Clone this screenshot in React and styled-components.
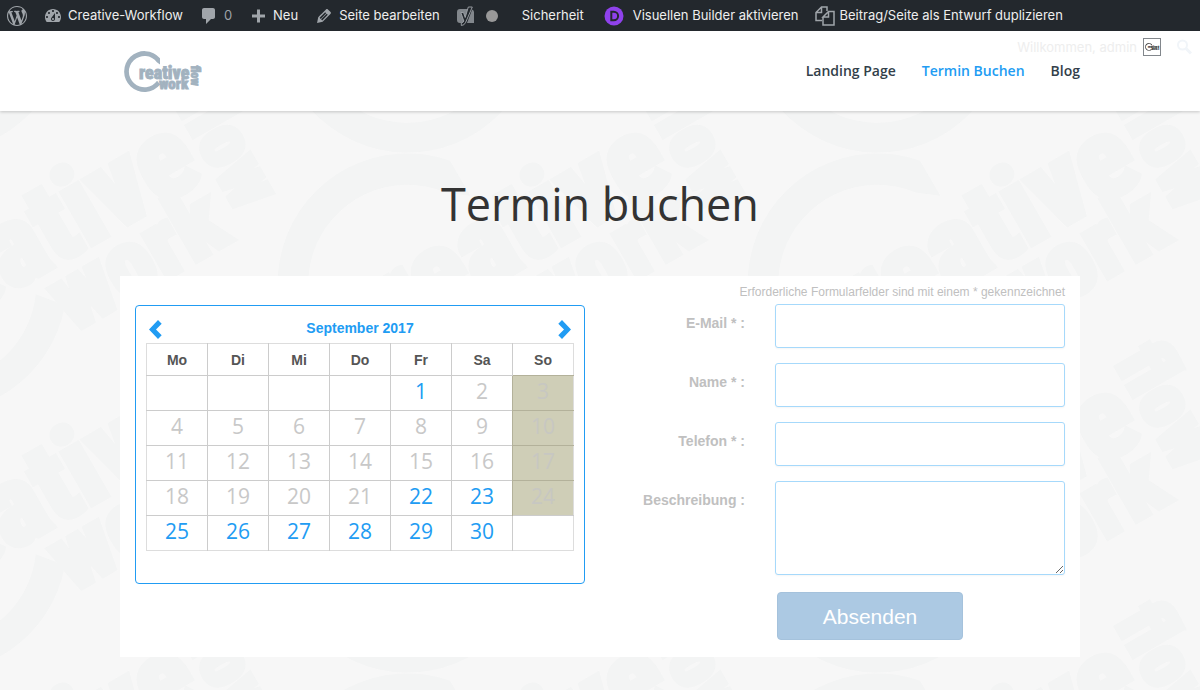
import React from "react";
import styled, { createGlobalStyle } from "styled-components";

const GlobalStyle = createGlobalStyle`
  *, *::before, *::after { box-sizing: border-box; }
  body {
    margin: 0;
    background: #f7f7f7;
    font-family: "Liberation Sans", Arial, sans-serif;
  }
`;

const BLUE = "#219cf3";

/* ---------- Admin bar ---------- */

const AdminBar = styled.nav`
  position: relative;
  z-index: 2;
  display: flex;
  align-items: center;
  height: 31px;
  background: #23282d;
  color: #eee;
  font: 400 13px/31px Inter, sans-serif;
  white-space: nowrap;
`;

const BarItem = styled.a`
  display: flex;
  align-items: center;
  gap: ${(p) => p.$gap || 5}px;
  height: 31px;
  padding: 0 8px 0 ${(p) => p.$lead || 8}px;
  color: ${(p) => (p.$muted ? "#9ea3a8" : "#eee")};
  text-decoration: none;
`;

const BarIcon = styled.svg`
  display: block;
  flex: none;
  width: 20px;
  height: 20px;
  fill: #a0a5aa;
`;

const StatusDot = styled.span`
  width: 12px;
  height: 12px;
  border-radius: 50%;
  background: #999;
`;

const Account = styled.div`
  position: absolute;
  top: 31px;
  right: 7px;
  display: flex;
  align-items: center;
  gap: 6px;
  height: 32px;
`;

const AccountLink = styled.a`
  display: flex;
  align-items: center;
  gap: 6px;
  color: #eee;
  text-decoration: none;
`;

const Avatar = styled.span`
  display: flex;
  align-items: center;
  justify-content: center;
  width: 18px;
  height: 18px;
  border: 1px solid #82878c;
  background: #fff;
  color: #444;
`;

const SearchButton = styled.button`
  display: flex;
  padding: 0;
  margin-left: 8px;
  border: 0;
  background: none;
`;

/* ---------- Site header ---------- */

const SiteHeader = styled.header`
  position: relative;
  z-index: 1;
  background: #fff;
  box-shadow: 0 1px 3px rgba(0, 0, 0, 0.2);
`;

const HeaderInner = styled.div`
  display: flex;
  align-items: center;
  justify-content: space-between;
  width: 80%;
  max-width: 1080px;
  height: 80px;
  margin: 0 auto;
`;

const HomeLink = styled.a`
  display: block;
  margin-left: 4px;
  padding-top: 1px;
  color: #a2b2bf;
`;

const LogoSvg = styled.svg`
  display: block;
  fill: currentColor;
  stroke: none;
`;

const Menu = styled.nav`
  display: flex;
  gap: 26px;
  font: 600 14px/20px "Open Sans", sans-serif;
`;

const MenuLink = styled.a`
  color: ${(p) => (p.$active ? BLUE : "#333f4a")};
  text-decoration: none;
`;

/* ---------- Page ---------- */

const Main = styled.main`
  display: grid;
  min-height: calc(100vh - 111px);
`;

const Backdrop = styled.svg`
  grid-area: 1 / 1;
  display: block;
  width: 100%;
  height: 0;
  min-height: 100%;
  color: #f3f4f4;
  fill: currentColor;
`;

const Content = styled.div`
  grid-area: 1 / 1;
  width: 80%;
  max-width: 1080px;
  margin: 0 auto;
  padding: 63px 0 33px;
`;

const Title = styled.h1`
  margin: 0 0 42px;
  color: #333;
  font: 400 45px/60px "Open Sans", sans-serif;
  text-align: center;
`;

const Card = styled.section`
  display: grid;
  grid-template-columns: 1fr 1fr;
  align-items: start;
  gap: 30px;
  padding: 8px 15px 17px;
  background: #fff;
`;

const Calendar = styled.div`
  margin-top: 21px;
  padding: 10px 10px 32px;
  border: 1px solid ${BLUE};
  border-radius: 4px;
`;

const CalendarHead = styled.div`
  display: flex;
  align-items: center;
  justify-content: space-between;
  height: 27px;
  padding: 0 3px;
`;

const Month = styled.h2`
  margin: 0;
  padding-bottom: 4px;
  color: ${BLUE};
  font: 700 14px/20px "Liberation Sans", Arial, sans-serif;
`;

const ArrowButton = styled.button`
  display: flex;
  padding: 0;
  border: 0;
  background: none;
  cursor: pointer;
  fill: ${BLUE};
`;

const Days = styled.table`
  width: 100%;
  table-layout: fixed;
  border-collapse: collapse;
  border: 1px solid #ddd;
`;

const Weekday = styled.th`
  height: 32px;
  padding: 0;
  border-left: 1px solid #ccc;
  color: #555;
  font: 700 14px/20px "Liberation Sans", Arial, sans-serif;

  &:first-child { border-left: 0; }
`;

const dayColor = { free: BLUE, past: "#c8c8c8", closed: "#c7c7c2" };

const Day = styled.td`
  height: 35px;
  padding: 0 0 4px;
  border: 0 solid ${(p) => (p.$state === "closed" ? "#b3b19a" : "#ccc")};
  border-width: 1px 0 0 1px;
  background: ${(p) => (p.$state === "closed" ? "#cfceb7" : "transparent")};
  color: ${(p) => dayColor[p.$state] || "inherit"};
  font: 400 21px/28px "Open Sans", sans-serif;
  text-align: center;

  &:first-child { border-left: 0; }
`;

const DayLink = styled.a`
  color: inherit;
  text-decoration: none;
`;

const Form = styled.form`
  display: grid;
  grid-template-columns: 1fr 290px;
  column-gap: 30px;
  row-gap: 15px;
`;

const Hint = styled.p`
  grid-column: 1 / -1;
  margin: 0 0 -15px;
  color: #c0c0c0;
  font-size: 12px;
  line-height: 16px;
  padding-bottom: 4px;
  text-align: right;
`;

const Label = styled.label`
  padding-top: 9px;
  color: #c0c0c0;
  font-size: 14px;
  font-weight: 700;
  line-height: 20px;
  text-align: right;
`;

const Input = styled.input`
  width: 100%;
  height: ${(p) => (p.as ? 94 : 44)}px;
  padding: 8px 12px;
  border: 1px solid #a6d9fb;
  border-radius: 3px;
  background: #fff;
  box-shadow: 0 1px 2px rgba(0, 0, 0, 0.04);
  color: #555;
  font: 400 14px/20px "Liberation Sans", Arial, sans-serif;
  resize: vertical;
  outline: none;
  display: block;
`;

const Submit = styled.button`
  grid-column: 2;
  justify-self: start;
  width: 186px;
  height: 48px;
  margin: 2px 0 0 2px;
  padding: 2px 0 0;
  border: 1px solid #a5c2dc;
  border-radius: 4px;
  background: #acc9e3;
  color: #fff;
  font: 400 21px/24px "Liberation Sans", Arial, sans-serif;
`;

/* ---------- Drawings ---------- */

const logoFont = {
  fontFamily: '"Liberation Sans Narrow", "Roboto Condensed", Roboto, sans-serif',
  fontWeight: 900,
};

function LogoMark() {
  return (
    <g>
      <path d="M36 7.2A20.4 20.4 0 1 0 36.2 33.6L33.1 29.8A15.6 15.6 0 1 1 32.9 11.2L36 13.6Z" />
      <g {...logoFont} stroke="currentColor" strokeWidth="0.8">
        <text x="15" y="27.500" fontSize="18">reative</text>
        <text x="35" y="38" fontSize="15">work</text>
        <text transform="translate(67 14.500) rotate(90)" fontSize="12">flow</text>
      </g>
    </g>
  );
}

function Logo({ width, height }) {
  return (
    <LogoSvg width={width} height={height} viewBox="0 0 78 42" role="img" aria-label="Creative Workflow">
      <LogoMark />
    </LogoSvg>
  );
}

const TILE_W = 470;
const TILE_H = 260;

function Pattern() {
  const copies = [];
  for (let r = -1; r <= 1; r++)
    for (let c = -1; c <= 1; c++)
      copies.push(
        <g
          key={`${r}.${c}`}
          transform={`translate(${235 + c * TILE_W} ${130 + r * TILE_H}) rotate(-30) scale(6.35) translate(-20.5 -20.5)`}
        >
          <LogoMark />
        </g>
      );
  return (
    <Backdrop aria-hidden="true">
      <defs>
        <pattern id="logos" x="172" y="42" width={TILE_W} height={TILE_H} patternUnits="userSpaceOnUse">
          {copies}
        </pattern>
      </defs>
      <rect width="100%" height="100%" fill="url(#logos)" />
    </Backdrop>
  );
}

const paths = {
  wordpress:
    "M20 10c0-5.51-4.49-10-10-10C4.48 0 0 4.49 0 10c0 5.52 4.48 10 10 10 5.51 0 10-4.48 10-10zM7.78 15.37L4.37 6.22c.55-.02 1.17-.08 1.17-.08.5-.06.44-1.13-.06-1.11 0 0-1.45.11-2.37.11-.18 0-.37 0-.58-.01C4.12 2.69 6.87 1.11 10 1.11c2.33 0 4.45.87 6.05 2.34-.68-.11-1.65.39-1.65 1.58 0 .74.45 1.36.9 2.1.35.61.55 1.36.55 2.46 0 1.49-1.4 5-1.4 5l-3.03-8.37c.54-.02.82-.17.82-.17.5-.05.44-1.25-.06-1.22 0 0-1.44.12-2.38.12-.87 0-2.33-.12-2.33-.12-.5-.03-.56 1.2-.06 1.22l.92.08 1.26 3.41zM17.41 10c.24-.64.74-1.87.43-4.25.7 1.29 1.05 2.71 1.05 4.25 0 3.29-1.73 6.24-4.4 7.78.97-2.59 1.94-5.2 2.92-7.78zM6.1 18.09C3.12 16.65 1.11 13.53 1.11 10c0-1.3.23-2.48.72-3.59C3.25 10.3 4.67 14.2 6.1 18.09zm4.03-6.63l2.58 6.98c-.86.29-1.76.45-2.71.45-.79 0-1.57-.11-2.29-.33.81-2.38 1.62-4.74 2.42-7.1z",
  dashboard:
    "M3.76 16h12.48c1.1-1.37 1.76-3.11 1.76-5 0-4.42-3.58-8-8-8s-8 3.58-8 8c0 1.89.66 3.63 1.76 5zM10 4c.55 0 1 .45 1 1s-.45 1-1 1-1-.45-1-1 .45-1 1-1zM6 6c.55 0 1 .45 1 1s-.45 1-1 1-1-.45-1-1 .45-1 1-1zm8 0c.55 0 1 .45 1 1s-.45 1-1 1-1-.45-1-1 .45-1 1-1zm-5.37 5.55L12 7v6c0 1.1-.9 2-2 2s-2-.9-2-2c0-.57.24-1.08.63-1.45zM4 10c.55 0 1 .45 1 1s-.45 1-1 1-1-.45-1-1 .45-1 1-1zm12 0c.55 0 1 .45 1 1s-.45 1-1 1-1-.45-1-1 .45-1 1-1zm-5 3c0-.55-.45-1-1-1s-1 .45-1 1 .45 1 1 1 1-.45 1-1z",
  comment:
    "M5 2h9c1.1 0 2 .9 2 2v7c0 1.1-.9 2-2 2h-2l-5 5v-5H5c-1.1 0-2-.9-2-2V4c0-1.1.9-2 2-2z",
  plus: "M17 8.500v3h-5v5H9v-5H4v-3h5v-5h3v5h5z",
  edit:
    "M13.89 3.39l2.71 2.72c.46.46.42 1.24.03 1.64l-8.01 8.02-5.56 1.16 1.16-5.58s7.6-7.63 7.99-8.03c.39-.39 1.22-.39 1.68.07zm-2.73 2.79l-5.59 5.61 1.11 1.11 5.54-5.65zm-2.97 8.23l5.58-5.6-1.07-1.08-5.59 5.6z",
};

const Icon = ({ name }) => (
  <BarIcon viewBox="0 0 20 20" aria-hidden="true">
    <path d={paths[name]} />
  </BarIcon>
);

const SeoIcon = () => (
  <BarIcon viewBox="0 0 20 20" role="img" aria-label="SEO">
    <path d="M4 3h10.500L9.500 17H4a3 3 0 0 1-3-3V6a3 3 0 0 1 3-3zM16.200 3.500A3 3 0 0 1 18 6v11h-7z" fill="#82878c" />
    <path d="M12.300 1h4L9.600 16.500Q8.300 19.500 5.300 19.500v-2.700q2 0 2.500-1.800L4.800 6.500h2.700l1.700 5z" fill="#23282d" stroke="#a0a5aa" strokeWidth="0.9" />
  </BarIcon>
);

const BuilderIcon = () => (
  <BarIcon viewBox="0 0 20 20" aria-hidden="true">
    <circle cx="10" cy="10" r="9.500" fill="#8f42ec" />
    <path d="M7.300 5.700h2.500a4.300 4.300 0 0 1 0 8.600H7.300z" fill="none" stroke="#23282d" strokeWidth="2" />
  </BarIcon>
);

const CopyIcon = () => (
  <BarIcon viewBox="0 0 20 20" aria-hidden="true">
    <path
      d="M7 14.500H1V6.500L6.500 1H12v4M6.500 1v5.500H1M8 11v8h11V5.500h-5.500L8 11h5.500V5.500"
      fill="none"
      stroke="#a0a5aa"
      strokeWidth="1.500"
    />
  </BarIcon>
);

const Arrow = ({ flip, label }) => (
  <ArrowButton type="button" aria-label={label}>
    <svg width="13" height="19" viewBox="0 0 13 19">
      <path d={flip ? "M13 9.500L4 0 .3 3.700 6 9.500.3 15.300 4 19z" : "M0 9.500L9 0l3.700 3.700L7 9.500l5.700 5.800L9 19z"} />
    </svg>
  </ArrowButton>
);

/* ---------- Data ---------- */

const weekdays = ["Mo", "Di", "Mi", "Do", "Fr", "Sa", "So"];
const weeks = [
  [null, null, null, null, 1, 2, 3],
  [4, 5, 6, 7, 8, 9, 10],
  [11, 12, 13, 14, 15, 16, 17],
  [18, 19, 20, 21, 22, 23, 24],
  [25, 26, 27, 28, 29, 30, null],
];

function stateOf(day, column) {
  if (!day) return "empty";
  if (column === 6) return "closed";
  return day === 1 || day >= 22 ? "free" : "past";
}

const fields = [
  { id: "email", label: "E-Mail * :", type: "email" },
  { id: "name", label: "Name * :", type: "text" },
  { id: "phone", label: "Telefon * :", type: "tel" },
];

export default function App() {
  return (
    <>
      <GlobalStyle />
      <AdminBar aria-label="Werkzeugleiste">
        <BarItem href="#" $lead={7} aria-label="WordPress"><Icon name="wordpress" /></BarItem>
        <BarItem href="#"><Icon name="dashboard" />Creative-Workflow</BarItem>
        <BarItem href="#" $muted><Icon name="comment" />0</BarItem>
        <BarItem href="#"><Icon name="plus" />Neu</BarItem>
        <BarItem href="#"><Icon name="edit" />Seite bearbeiten</BarItem>
        <BarItem href="#" $gap={10}><SeoIcon /><StatusDot /></BarItem>
        <BarItem href="#" $lead={16}>Sicherheit</BarItem>
        <BarItem href="#" $lead={12} $gap={9}><BuilderIcon />Visuellen Builder aktivieren</BarItem>
        <BarItem href="#"><CopyIcon />Beitrag/Seite als Entwurf duplizieren</BarItem>
        <Account>
          <AccountLink href="#">
            Willkommen, admin
            <Avatar><Logo width={15} height={8} /></Avatar>
          </AccountLink>
          <SearchButton type="button" aria-label="Suchen">
            <svg width="18" height="18" viewBox="0 0 18 18" fill="none" stroke="#f1f5f9" strokeWidth="2">
              <circle cx="7.500" cy="7" r="4.500" />
              <path d="M11 10.500l5 5" strokeWidth="3" />
            </svg>
          </SearchButton>
        </Account>
      </AdminBar>

      <SiteHeader>
        <HeaderInner>
          <HomeLink href="#"><Logo width={78} height={42} /></HomeLink>
          <Menu aria-label="Hauptmenü">
            <MenuLink href="#">Landing Page</MenuLink>
            <MenuLink href="#" $active aria-current="page">Termin Buchen</MenuLink>
            <MenuLink href="#">Blog</MenuLink>
          </Menu>
        </HeaderInner>
      </SiteHeader>

      <Main>
        <Pattern />
        <Content>
          <Title>Termin buchen</Title>
          <Card>
            <Calendar>
              <CalendarHead>
                <Arrow label="Voriger Monat" />
                <Month>September 2017</Month>
                <Arrow flip label="Nächster Monat" />
              </CalendarHead>
              <Days>
                <thead>
                  <tr>{weekdays.map((d) => <Weekday key={d} scope="col">{d}</Weekday>)}</tr>
                </thead>
                <tbody>
                  {weeks.map((week, i) => (
                    <tr key={i}>
                      {week.map((day, c) => {
                        const state = stateOf(day, c);
                        return (
                          <Day key={c} $state={state}>
                            {state === "free" ? <DayLink href="#">{day}</DayLink> : day}
                          </Day>
                        );
                      })}
                    </tr>
                  ))}
                </tbody>
              </Days>
            </Calendar>

            <Form onSubmit={(e) => e.preventDefault()}>
              <Hint>Erforderliche Formularfelder sind mit einem * gekennzeichnet</Hint>
              {fields.map((f) => (
                <React.Fragment key={f.id}>
                  <Label htmlFor={f.id}>{f.label}</Label>
                  <Input id={f.id} type={f.type} />
                </React.Fragment>
              ))}
              <Label htmlFor="description">Beschreibung :</Label>
              <Input as="textarea" id="description" />
              <Submit type="submit">Absenden</Submit>
            </Form>
          </Card>
        </Content>
      </Main>
    </>
  );
}
